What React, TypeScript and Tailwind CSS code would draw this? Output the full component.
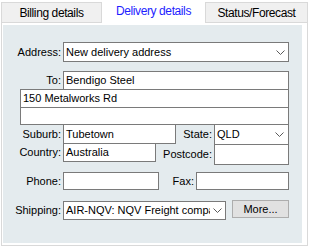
const Chevron = () => (
  <svg width="9" height="5" viewBox="0 0 9 5" className="shrink-0">
    <polyline points="0.5,0.5 4.5,4.5 8.5,0.5" fill="none" stroke="#5a5a5a" strokeWidth="1" />
  </svg>
);

// right-aligned label; long text spills out to the left like the WinForms one
const Label = ({ text, w }: { text: string; w: string }) => (
  <div className={`${w} flex shrink-0 justify-end pr-[2px]`}>
    <span className="whitespace-nowrap">{text}</span>
  </div>
);

export default function App() {
  return (
    <div className="h-[249px] w-[310px] bg-white font-['Liberation_Sans',Arial,sans-serif] text-[11px] leading-none text-black">
      {/* tabs */}
      <div className="flex h-[22px] items-end pl-[1px] text-[12px] tracking-[-0.4px]">
        <div className="flex h-[20px] w-[101px] items-center justify-center border border-b-0 border-[#d9d9d9] bg-[#f0f0f0]">
          Billing details
        </div>
        <div className="relative z-10 -mb-px flex h-[23px] w-[103px] items-center justify-center bg-white pb-[1px] text-[#1e1eff]">
          Delivery details
        </div>
        <div className="flex h-[20px] w-[103px] items-center justify-center border border-b-0 border-[#d9d9d9] bg-[#f0f0f0]">
          Status/Forecast
        </div>
      </div>

      {/* page */}
      <div className="ml-[1px] h-[224px] w-[307px] border border-[#d9d9d9] pb-[2px] pl-px pr-[5px] pt-[2px]">
        <div className="h-full bg-[#e4ebee] pl-[17px] pt-[17px]">
          <div className="flex h-[20px] items-center">
            <Label text="Address:" w="w-[43px]" />
            <div className="flex h-[20px] w-[226px] items-center justify-between border border-[#7a7a7a] bg-white pl-[2px] pr-[3px]">
              <span>New delivery address</span>
              <Chevron />
            </div>
          </div>

          <div className="mt-[9px] flex h-[19px] items-center">
            <Label text="To:" w="w-[43px]" />
            <div className="flex h-[19px] w-[226px] items-center border border-[#7a7a7a] bg-white pl-[2px]">
              Bendigo Steel
            </div>
          </div>
          <div className="-mt-px w-[269px]">
            <div className="flex h-[19px] items-center border border-[#7a7a7a] bg-white pl-[2px]">
              150 Metalworks Rd
            </div>
            <div className="-mt-px h-[18px] border border-[#7a7a7a] bg-white" />
          </div>

          <div className="-mt-px flex">
            <div className="w-[156px]">
              <div className="flex items-center">
                <Label text="Suburb:" w="w-[43px]" />
                <div className="flex h-[20px] w-[113px] items-center border border-[#7a7a7a] bg-white pl-[2px]">
                  Tubetown
                </div>
              </div>
              <div className="-mt-px flex items-center">
                <Label text="Country:" w="w-[43px]" />
                <div className="flex h-[19px] w-[93px] items-center border border-[#7a7a7a] bg-white pl-[2px]">
                  Australia
                </div>
              </div>
            </div>
            <div>
              <div className="flex items-center">
                <Label text="State:" w="w-[38px]" />
                <div className="flex h-[21px] w-[75px] items-center justify-between border border-[#7a7a7a] bg-white pl-[2px] pr-[4px]">
                  <span>QLD</span>
                  <Chevron />
                </div>
              </div>
              <div className="-mt-px flex items-center">
                <Label text="Postcode:" w="w-[38px]" />
                <div className="h-[21px] w-[75px] border border-[#7a7a7a] bg-white" />
              </div>
            </div>
          </div>

          <div className="mt-[7px] flex items-center">
            <Label text="Phone:" w="w-[43px]" />
            <div className="h-[18px] w-[96px] border border-[#7a7a7a] bg-white" />
            <Label text="Fax:" w="w-[37px]" />
            <div className="h-[18px] w-[93px] border border-[#7a7a7a] bg-white" />
          </div>

          <div className="mt-[11px] flex items-start">
            <div className="flex h-[19px] items-center">
              <Label text="Shipping:" w="w-[43px]" />
              <div className="flex h-[19px] w-[163px] items-center justify-between overflow-hidden border border-[#7a7a7a] bg-white pl-[2px] pr-[3px]">
                <span className="overflow-hidden whitespace-nowrap">AIR-NQV: NQV Freight company</span>
                <span className="ml-[3px]">
                  <Chevron />
                </span>
              </div>
            </div>
            <button className="-mt-px ml-[6px] flex h-[18px] w-[57px] items-center justify-center border border-[#adadad] bg-[#e1e1e1]">
              More...
            </button>
          </div>
        </div>
      </div>
    </div>
  );
}
